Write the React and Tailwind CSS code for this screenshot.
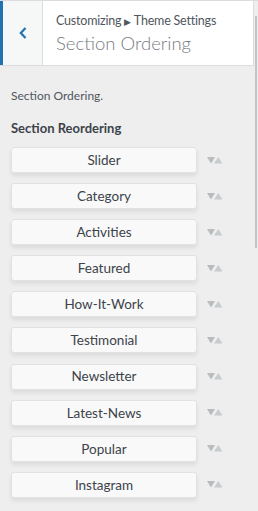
import React from "react";

const sections = [
  "Slider",
  "Category",
  "Activities",
  "Featured",
  "How-It-Work",
  "Testimonial",
  "Newsletter",
  "Latest-News",
  "Popular",
  "Instagram",
];

// little down/up arrows next to each section
const MoveArrows = () => (
  <svg width="16" height="8" viewBox="0 0 16 8" className="shrink-0">
    <polygon points="0,1 8,1 4,7.5" fill="#b9bcbf" />
    <polygon points="7,7.5 15.5,7.5 11.25,1" fill="#c9cccf" />
  </svg>
);

export default function App() {
  return (
    <div
      className="relative w-[258px] h-[511px] overflow-hidden bg-[#eeeeee] border-t border-[#dcdcde]"
      style={{ fontFamily: 'Lato, "Open Sans", sans-serif' }}
    >
      {/* header */}
      <div className="flex h-[65px] w-[254px] bg-white border-b border-r border-[#dcdcde]">
        <button className="flex items-center justify-center w-[43px] h-full bg-[#f6f7f7] border-l-[3px] border-[#2271b1] border-r border-r-[#dcdcde]">
          <svg width="10" height="14" viewBox="0 0 10 14">
            <path d="M7.5 2 L2.8 7 L7.5 12" fill="none" stroke="#2271b1" strokeWidth="2.2" />
          </svg>
        </button>
        <div className="flex flex-col pl-[13px] pt-[11px]">
          <span className="text-[12.5px] leading-[17px] text-[#50575e] tracking-[-0.2px]">
            Customizing <span className="text-[9px]">▶</span> Theme Settings
          </span>
          <span className="text-[18.5px] leading-[26px] font-light text-[#787c82]">
            Section Ordering
          </span>
        </div>
      </div>

      {/* scrollbar */}
      <div className="absolute right-[1px] top-[15px] w-[2px] h-[232px] bg-[#c3c4c7]" />

      <div className="px-[11px] pt-[21px]">
        <p className="text-[12px] leading-[18px] text-[#50575e]">Section Ordering.</p>
        <h3 className="mt-[15px] text-[13px] leading-[16px] font-bold text-[#3c434a]">
          Section Reordering
        </h3>
        <ul className="mt-[11px] flex flex-col gap-[10.1px]">
          {sections.map((s) => (
            <li key={s} className="flex items-center">
              <div className="w-[186px] h-[26px] flex items-center justify-center bg-[#f9f9f9] border border-[#e2e2e2] rounded-[3px] shadow-[0_3px_4px_rgba(0,0,0,0.08)] text-[13.5px] text-[#3c434a]">
                {s}
              </div>
              <div className="ml-[10px] mt-[-1px]">
                <MoveArrows />
              </div>
            </li>
          ))}
        </ul>
      </div>
    </div>
  );
}
